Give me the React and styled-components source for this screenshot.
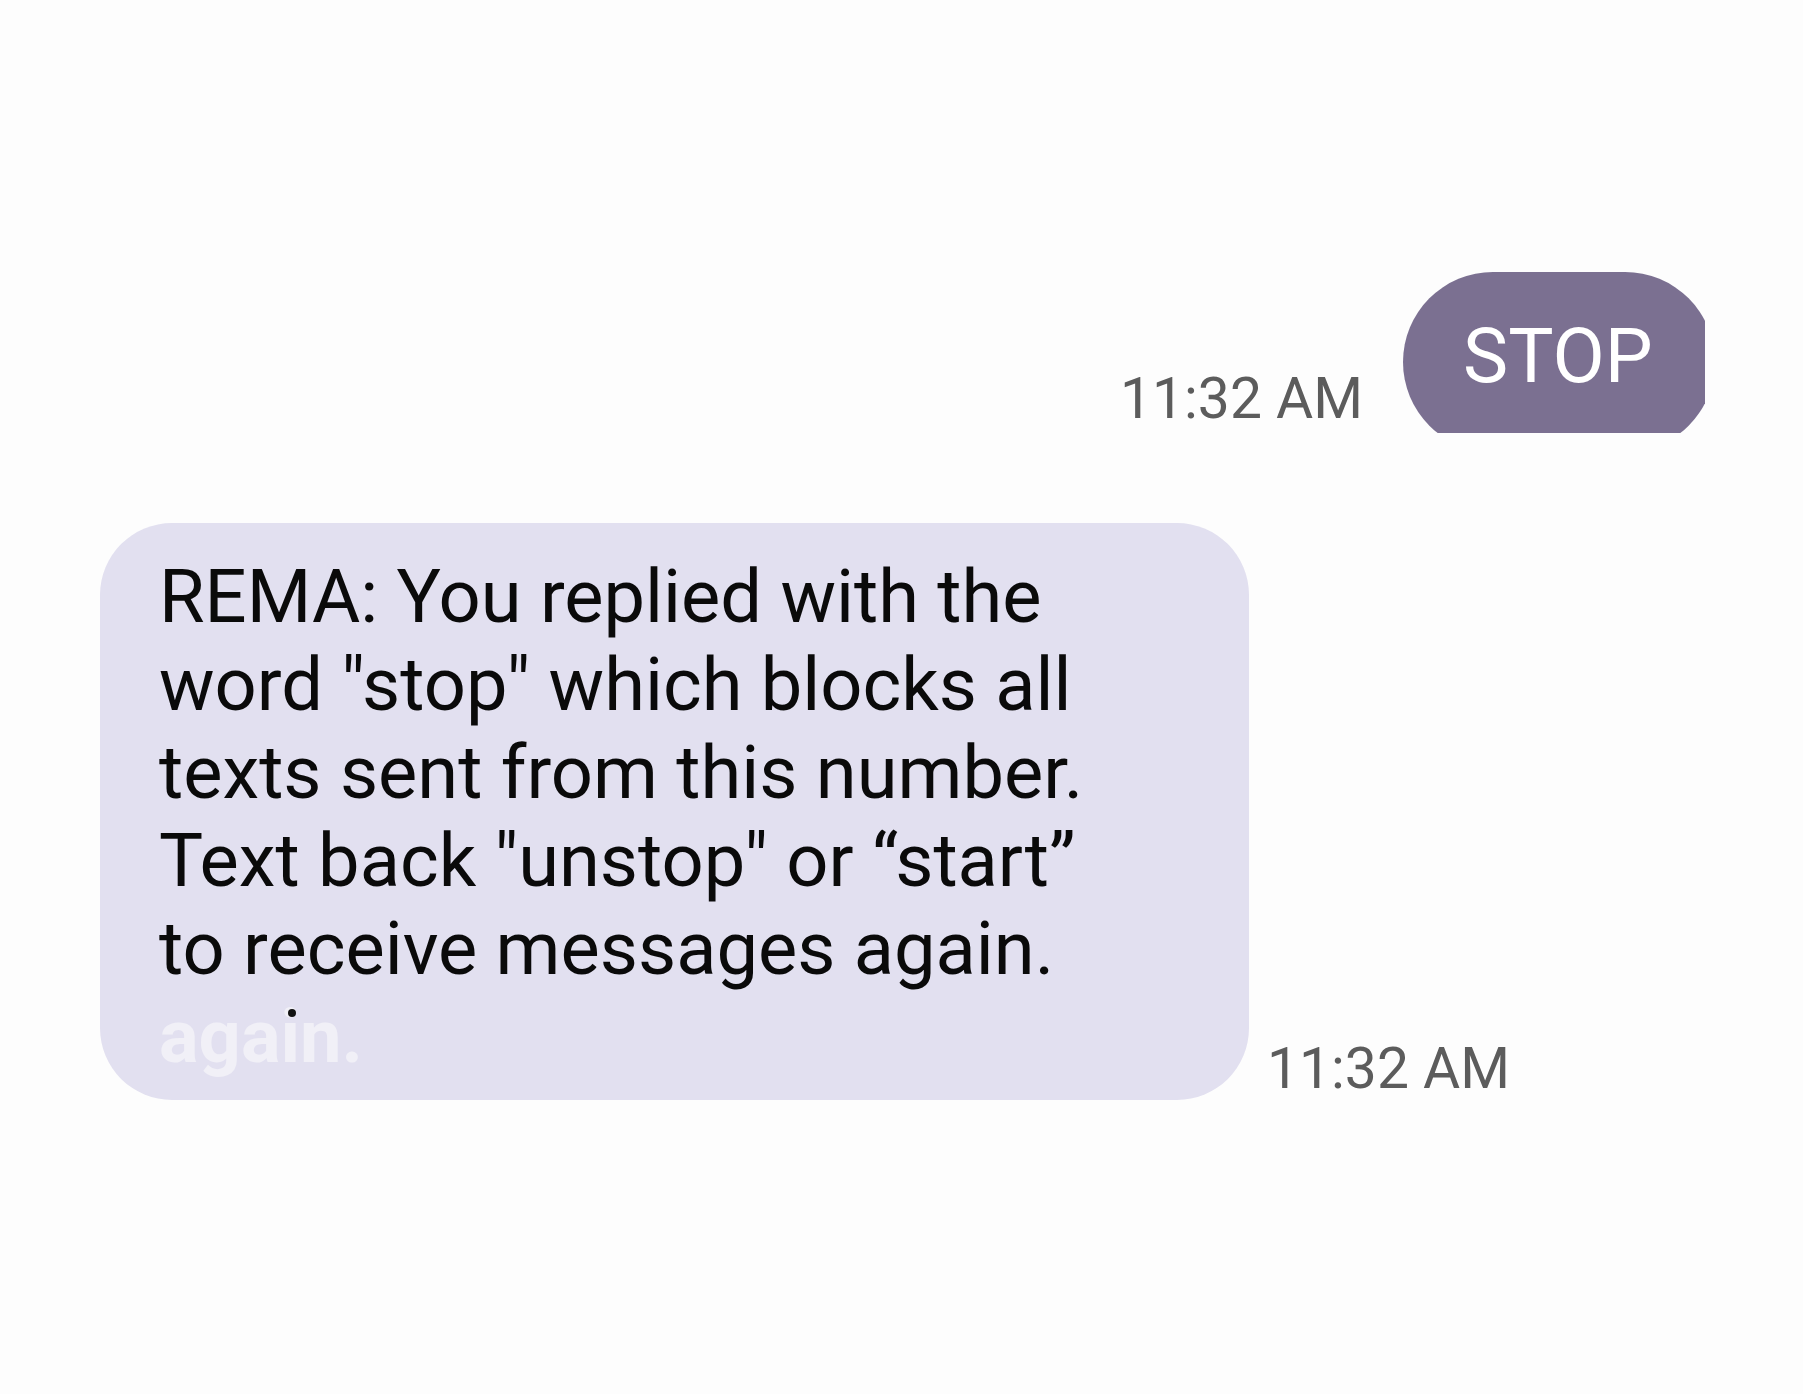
import React from "react";
import styled, { createGlobalStyle } from "styled-components";

const GlobalStyle = createGlobalStyle`
  html, body {
    margin: 0;
    padding: 0;
    background: #fdfdfd;
  }
  body {
    font-family: Roboto, "Liberation Sans", Arial, sans-serif;
  }
`;

const Page = styled.div`
  width: 1803px;
  min-height: 1394px;
  box-sizing: border-box;
  padding: 272px 98px 0 100px;
  display: flex;
  flex-direction: column;
  gap: 90px;
  background: #fdfdfd;
`;

const Row = styled.div`
  display: flex;
  align-items: flex-end;
  justify-content: ${(p) => (p.$out ? "flex-end" : "flex-start")};
  gap: ${(p) => (p.$out ? "40px" : "18px")};
`;

const Time = styled.span`
  font-family: Roboto, "Liberation Sans", sans-serif;
  font-size: 57px;
  line-height: 1;
  color: #5c5c5c;
  white-space: nowrap;
  margin-bottom: ${(p) => p.$lift}px;
`;

const OutClip = styled.div`
  width: 302px;
  height: 161px;
  overflow: hidden;
  flex: none;
`;

const OutPill = styled.div`
  width: 312px;
  height: 180px;
  border-radius: 90px;
  background: #7b7091;
  box-sizing: border-box;
  padding: 46px 0 0 60px;
`;

const OutText = styled.div`
  font-family: Roboto, "Liberation Sans", sans-serif;
  font-size: 76px;
  line-height: 1;
  color: #ffffff;
`;

const InBubble = styled.div`
  position: relative;
  width: 1149px;
  box-sizing: border-box;
  padding: 30px 0 19px 59px;
  border-radius: 72px;
  background: #e2e0f0;
  flex: none;
`;

const Line = styled.div`
  font-family: Roboto, "Liberation Sans", sans-serif;
  font-size: 74px;
  line-height: 88px;
  height: 88px;
  white-space: nowrap;
  color: ${(p) => (p.$ghost ? "#f1f0f7" : "#0a0a0a")};
  font-weight: ${(p) => (p.$ghost ? 700 : 400)};
`;

const Speck = styled.span`
  position: absolute;
  left: 188px;
  top: 486px;
  width: 8px;
  height: 8px;
  border-radius: 50%;
  background: #111;
`;

const lines = [
  "REMA: You replied with the",
  "word \"stop\" which blocks all",
  "texts sent from this number.",
  "Text back \"unstop\" or \u201Cstart\u201D",
  "to receive messages again.",
];

export default function App() {
  return (
    <>
      <GlobalStyle />
      <Page>
        <Row $out>
          <Time $lift={6}>11:32 AM</Time>
          <OutClip>
            <OutPill>
              <OutText>STOP</OutText>
            </OutPill>
          </OutClip>
        </Row>
        <Row>
          <InBubble>
            {lines.map((l) => (
              <Line key={l}>{l}</Line>
            ))}
            <Line $ghost>again.</Line>
            <Speck />
          </InBubble>
          <Time $lift={3}>11:32 AM</Time>
        </Row>
      </Page>
    </>
  );
}
